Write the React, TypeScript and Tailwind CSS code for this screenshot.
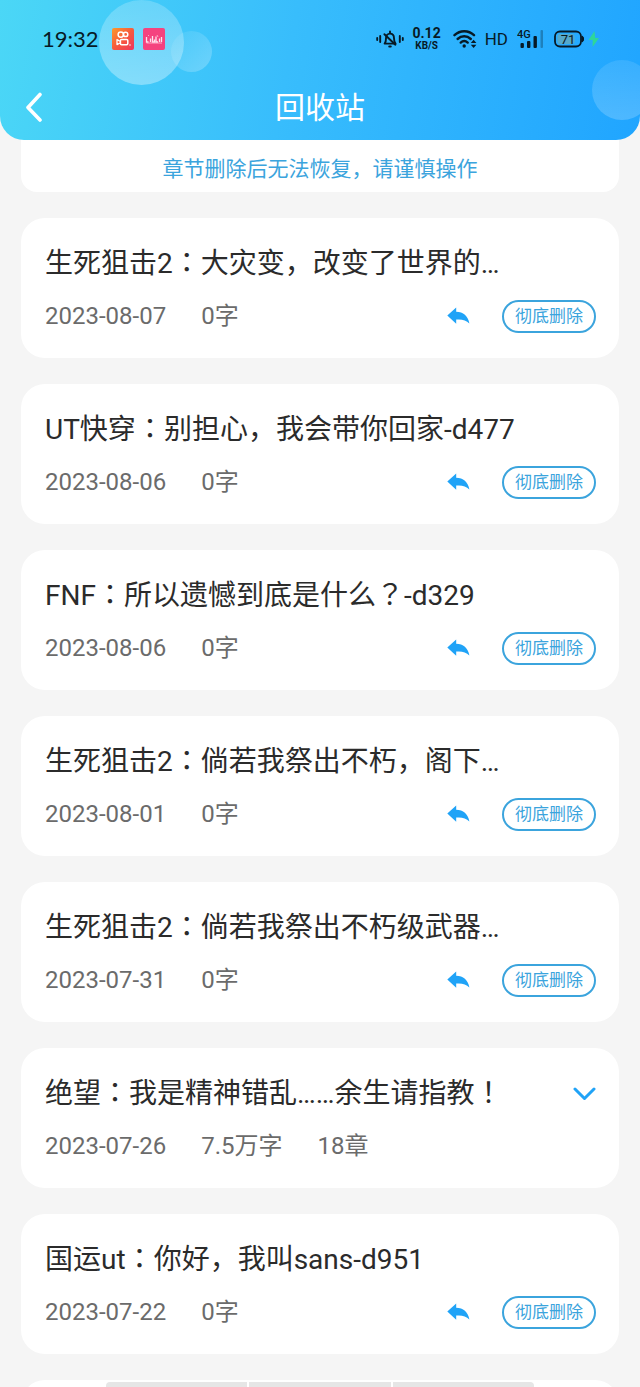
import React from 'react';

const chapters = [
  { id: 1, title: '生死狙击2：大灾变，改变了世界的…', date: '2023-08-07', words: '0字' },
  { id: 2, title: 'UT快穿：别担心，我会带你回家-d477', date: '2023-08-06', words: '0字' },
  { id: 3, title: 'FNF：所以遗憾到底是什么？-d329', date: '2023-08-06', words: '0字' },
  { id: 4, title: '生死狙击2：倘若我祭出不朽，阁下…', date: '2023-08-01', words: '0字' },
  { id: 5, title: '生死狙击2：倘若我祭出不朽级武器…', date: '2023-07-31', words: '0字' },
  { id: 6, title: '绝望：我是精神错乱……余生请指教！', date: '2023-07-26', words: '7.5万字', count: '18章' },
  { id: 7, title: '国运ut：你好，我叫sans-d951', date: '2023-07-22', words: '0字' },
];

type Chapter = {
  id: number;
  title: string;
  date: string;
  words: string;
  count?: string;
};

// colons and marks sit in the middle of their box in the TC font
function Title({ text }: { text: string }) {
  return (
    <h2 className="text-[28px] leading-9 text-[#2b2b2b]">
      {text.split(/([：！？])/).map((part, i) =>
        i % 2 === 1 ? (
          <span key={i} lang="zh-TW" className="font-['Noto_Sans_CJK_TC',sans-serif] leading-none">{part}</span>
        ) : (
          part
        )
      )}
    </h2>
  );
}

function StatusBar() {
  return (
    <div className="relative flex h-[78px] items-center justify-between pl-[42px] pr-10 text-[#071a26]">
      <div className="flex items-center">
        <span className="font-['Lato',sans-serif] text-[22px] leading-7">19:32</span>
        <svg className="ml-[13px] h-[22px] w-[22px]" viewBox="0 0 22 22" fill="none">
          <defs>
            <linearGradient id="kw" x1="0" y1="0" x2="1" y2="1">
              <stop offset="0" stopColor="#fb9a2c" />
              <stop offset="0.5" stopColor="#f75a3c" />
              <stop offset="1" stopColor="#ee3560" />
            </linearGradient>
          </defs>
          <rect width="22" height="22" rx="2" fill="url(#kw)" />
          <circle cx="8.8" cy="6.6" r="2.7" stroke="#fff" strokeWidth="1.5" />
          <circle cx="13.6" cy="6.4" r="2.2" stroke="#fff" strokeWidth="1.5" />
          <rect x="8.4" y="11.4" width="7.4" height="5.4" rx="1.2" stroke="#fff" strokeWidth="1.5" />
          <path d="M8 13.2L5 11.6v5L8 15" stroke="#fff" strokeWidth="1.3" strokeLinejoin="round" />
          <path d="M18 16.2v1.6" stroke="#fff" strokeWidth="1" />
        </svg>
        <svg className="ml-[9px] h-[22px] w-[22px]" viewBox="0 0 22 22" fill="none">
          <rect width="22" height="22" rx="2" fill="#f5437f" />
          <path
            d="M3.500 9v5h2M7.500 10.500V14M9.500 8v6h2v-2.500M13 8.500V14h2M16.500 10.500V14M18.500 9v5"
            stroke="#ffe3ee"
            strokeWidth="1.3"
          />
          <path d="M3.500 15h15.500M5 8l1-1M14 7l1 2" stroke="#ffc3d8" strokeWidth="0.8" />
        </svg>
      </div>

      <div className="flex items-center">
        <svg className="h-[18px] w-[28px]" viewBox="0 0 28 18" fill="none" stroke="currentColor" strokeWidth="1.9" strokeLinecap="round">
          <path d="M1.200 8v2M4.200 6v6M23.800 6v6M26.800 8v2" />
          <path d="M8.600 13.600c1.200-1.200 1.400-2.400 1.400-5.400 0-2.800 1.700-4.600 4-4.600s4 1.800 4 4.600c0 3 .4 4.200 1.600 5.400z" strokeLinejoin="round" />
          <path d="M14 1.400v1.400M13.200 16.500h1.600M8.400 4.200l11 10.500" />
        </svg>
        <div className="ml-[9px] flex flex-col items-center font-['Roboto',sans-serif] font-bold">
          <span className="text-[14px] leading-[14px]">0.12</span>
          <span className="text-[10px] leading-[12px]">KB/S</span>
        </div>
        <svg className="ml-3 h-[20px] w-[24px]" viewBox="0 0 24 20" fill="none" stroke="currentColor" strokeWidth="2.4" strokeLinecap="round">
          <path d="M1.500 6.200C7 .9 15.500.9 21 6.200" />
          <path d="M4.600 10c3.900-3.600 9.300-3.600 13.200 0" />
          <path d="M7.700 13.600c2.100-1.900 4.900-1.900 7 0" />
          <circle cx="11.200" cy="17" r="1.700" fill="currentColor" stroke="none" />
          <path d="M17.800 14l2.800-3.300 2.800 3.300zM17.800 15.800l2.800 3.300 2.800-3.300z" fill="currentColor" stroke="none" />
        </svg>
        <span className="ml-2 font-['Roboto',sans-serif] text-[17px] leading-6">HD</span>
        <svg className="ml-[9px] h-[20px] w-[28px]" viewBox="0 0 28 20" fill="currentColor">
          <text x="0" y="9" fontSize="11" fontWeight="500" fontFamily="Roboto, sans-serif">4G</text>
          <rect x="3.500" y="14" width="3.400" height="5" rx="1" />
          <rect x="10" y="12" width="3.400" height="7" rx="1" />
          <rect x="16.500" y="7" width="3.400" height="12" rx="1" />
          <rect x="23.500" y="1" width="2.500" height="18" rx="1" opacity="0.3" />
        </svg>
        <svg className="ml-[9px] h-[18px] w-[30px]" viewBox="0 0 30 18" fill="none">
          <rect x="1" y="1.500" width="26" height="15" rx="5" stroke="currentColor" strokeWidth="1.800" />
          <rect x="3.500" y="4" width="17" height="10" rx="2.500" fill="#56a9c9" />
          <path d="M28 6v6c1-.4 1.600-1.500 1.600-3S29 6.400 28 6z" fill="currentColor" stroke="currentColor" />
          <text x="14" y="13.500" fontSize="13" textAnchor="middle" fill="currentColor" fontFamily="Roboto, sans-serif">71</text>
        </svg>
        <svg className="ml-1 h-[16px] w-[12px]" viewBox="0 0 12 16" fill="#2fd69a">
          <path d="M6.500 0L.5 9h4.200L4.600 16l6.400-9H7.200z" />
        </svg>
      </div>
    </div>
  );
}

function Header() {
  return (
    <header className="relative z-10 h-[140px] shrink-0 overflow-hidden rounded-b-3xl bg-[linear-gradient(100deg,#4bd7f6_0%,#38bdfc_45%,#20a5ff_100%)]">
      {/* bubbles */}
      <div className="absolute left-[99px] top-0 h-[85px] w-[85px] rounded-full bg-linear-to-b from-white/20 to-white/35" />
      <div className="absolute left-[171px] top-[31px] h-[41px] w-[41px] rounded-full bg-linear-to-br from-white/5 to-white/25" />
      <div className="absolute -right-3 top-[60px] h-[60px] w-[60px] rounded-full bg-linear-to-b from-white/10 to-white/20" />

      <StatusBar />

      <div className="relative flex h-[60px] items-center justify-center">
        <button aria-label="返回" className="absolute left-[25px] flex items-center">
          <svg className="h-8 w-[18px]" viewBox="0 0 18 32" fill="none" stroke="#fff" strokeWidth="3.600" strokeLinecap="round" strokeLinejoin="round">
            <path d="M15 2.500L3 15.500l12 12.500" />
          </svg>
        </button>
        <h1 className="text-[30px] leading-9 text-white">回收站</h1>
      </div>
    </header>
  );
}

function ChapterCard({ chapter }: { chapter: Chapter }) {
  return (
    <li className="rounded-3xl bg-white pb-6 pl-6 pr-[23px] pt-7">
      <div className="flex items-center justify-between">
        <Title text={chapter.title} />
        {chapter.count && (
          <button aria-label="展开">
            <svg className="h-[15px] w-[23px]" viewBox="0 0 23 15" fill="none" stroke="#20a3f7" strokeWidth="3" strokeLinecap="round" strokeLinejoin="round">
              <path d="M2 2l9.500 9.500L21 2" />
            </svg>
          </button>
        )}
      </div>
      <div className="mt-4 flex h-9 items-center justify-between">
        <div className="flex gap-[35px] text-[24px] leading-9 text-[#6b6b6b]">
          <span>{chapter.date}</span>
          <span>{chapter.words}</span>
          {chapter.count && <span>{chapter.count}</span>}
        </div>
        {!chapter.count && (
          <div className="flex items-center gap-8">
            <button aria-label="恢复">
              <svg className="h-[18px] w-[23px]" viewBox="0 0 23 18" fill="#20a3f7">
                <path d="M.3 8.600L9.200.6v4.200c7 .2 11.800 4 13.200 11.700-3.400-3.400-7.700-4.500-13.200-3.900v4.200z" />
              </svg>
            </button>
            <button className="h-[33px] rounded-full border-2 border-[#3ba4dd] px-[11px] text-[17px] leading-7 text-[#3ba4dd]">
              彻底删除
            </button>
          </div>
        )}
      </div>
    </li>
  );
}

export default function App() {
  return (
    <div
      lang="zh-CN"
      className="relative flex h-screen flex-col overflow-hidden bg-[#f5f5f5] font-['Roboto','Noto_Sans_CJK_SC',sans-serif]"
    >
      <Header />
      <main className="-mt-6 flex-1 overflow-hidden px-[21px]">
        <p className="rounded-2xl bg-white pb-2 pt-[38px] text-center text-[21px] leading-[30px] text-[#3ba4dd]">
          章节删除后无法恢复，请谨慎操作
        </p>
        <ul className="mt-[26px] space-y-[26px]">
          {chapters.map((chapter) => (
            <ChapterCard key={chapter.id} chapter={chapter} />
          ))}
          <li className="h-[140px] rounded-3xl bg-white" />
        </ul>
      </main>

      {/* gesture bar */}
      <div className="absolute inset-x-0 bottom-0 flex h-[5px] gap-0.5 px-[106px]">
        <div className="flex-1 rounded-tl-sm bg-[#e6e6e6]" />
        <div className="flex-1 bg-[#e6e6e6]" />
        <div className="flex-1 rounded-tr-sm bg-[#e6e6e6]" />
      </div>
    </div>
  );
}
